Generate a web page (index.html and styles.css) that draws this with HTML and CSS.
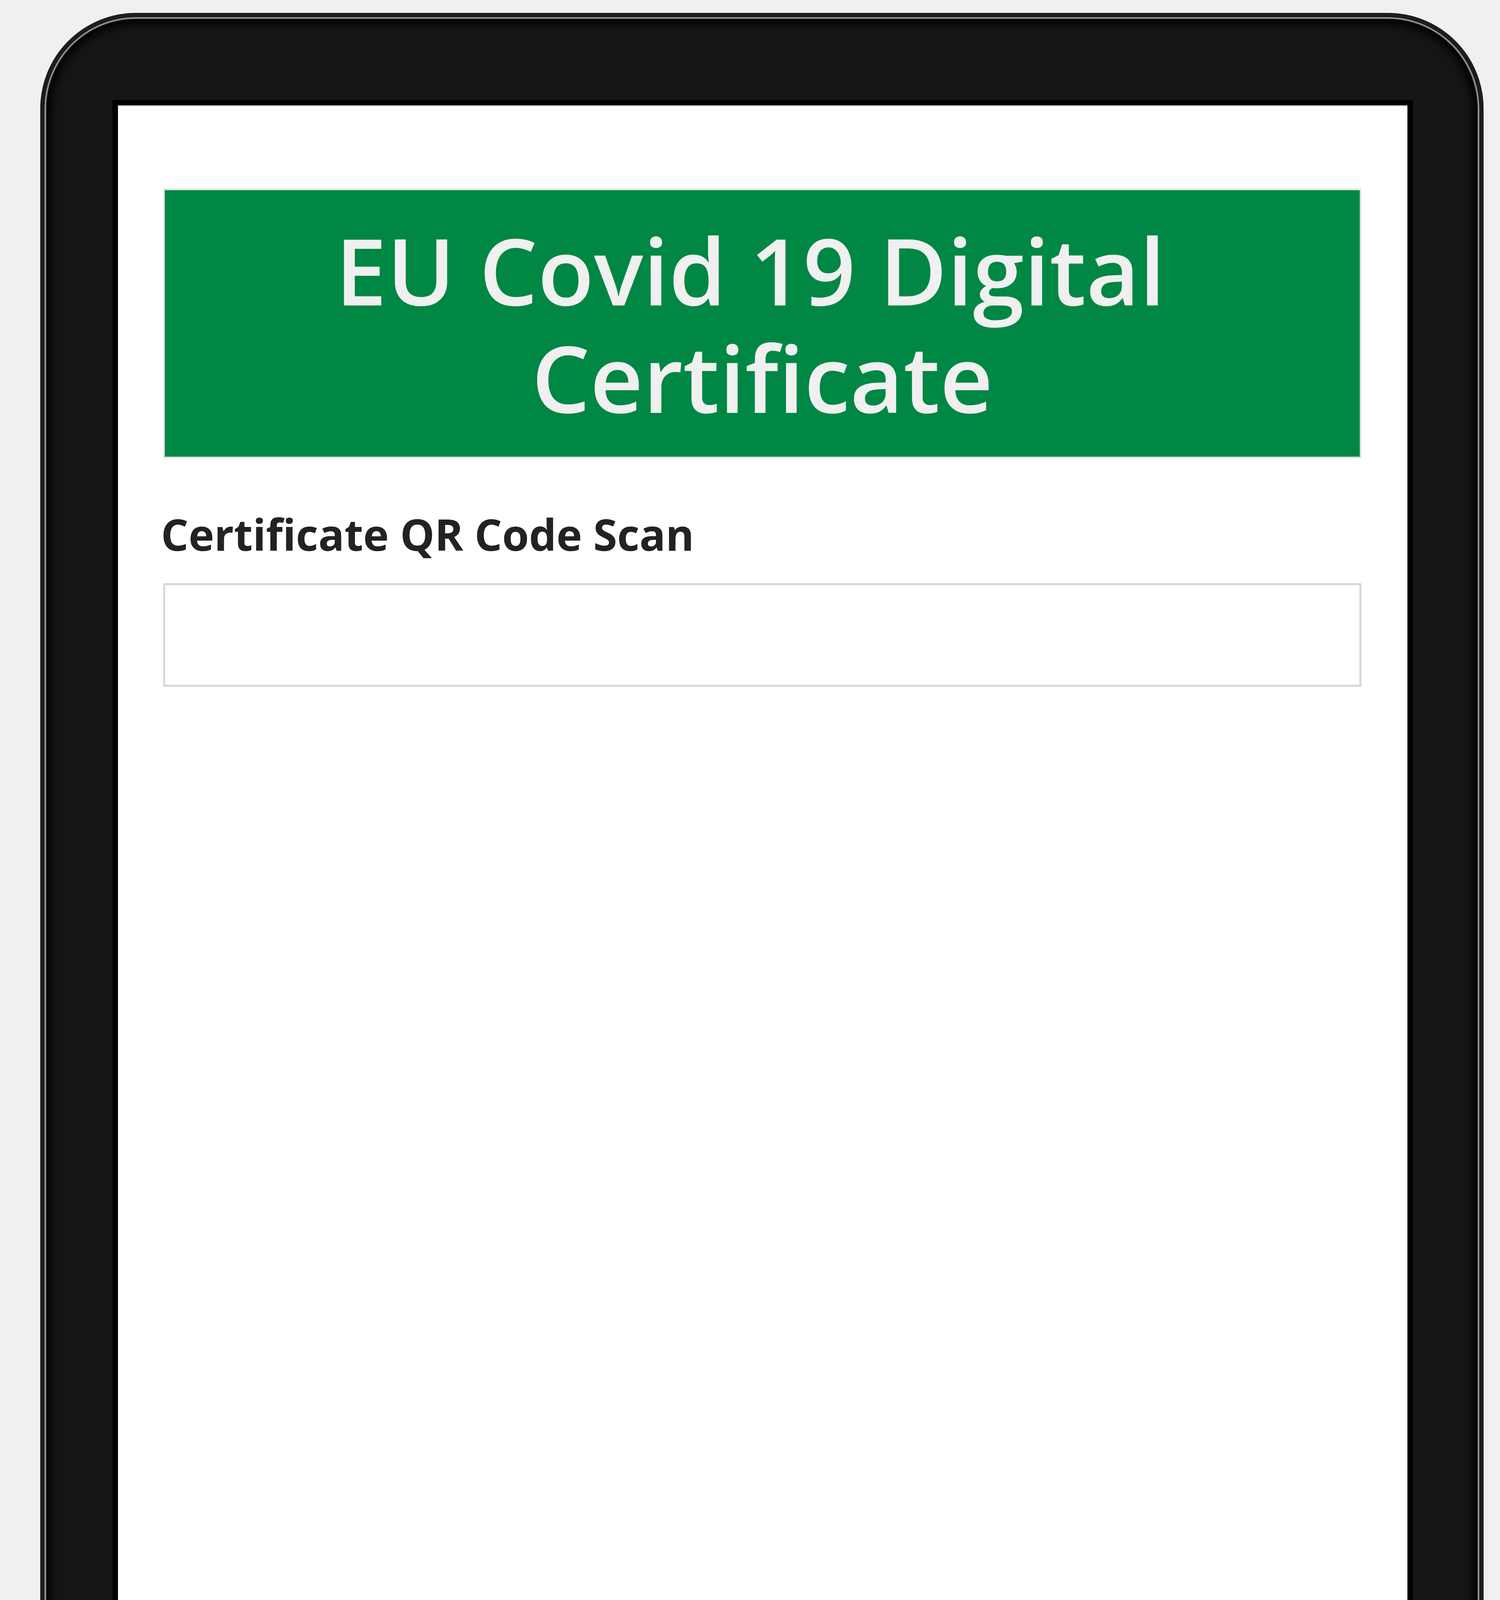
FILE: index.html
```html
<!DOCTYPE html>
<html lang="en">
<head>
<meta charset="utf-8">
<title>EU Covid 19 Digital Certificate</title>
<link rel="stylesheet" href="styles.css">
</head>
<body>
  <div class="device">
    <div class="screen">
      <div class="header">
        <h1 class="title">EU Covid 19 Digital Certificate</h1>
      </div>
      <label class="field-label" for="qr">Certificate QR Code Scan</label>
      <input id="qr" class="field-input" type="text">
    </div>
  </div>
</body>
</html>
```
FILE: styles.css
```css
* {
  box-sizing: border-box;
}

html {
  background: #f0f0f0;
}

body {
  margin: 0;
  padding: 33px 0 0 103px;
  background: #f0f0f0;
  font-family: "Open Sans", "Liberation Sans", sans-serif;
}

.device {
  width: 3695px;
  height: 6426px;
  border: 11px solid #1c1c1c;
  border-radius: 245px;
  background: #151515;
  box-shadow:
    inset 0 0 2px 4px #9c9c9c,
    inset 0 0 16px 20px #060606;
  padding: 212px 0 0 174px;
}

.screen {
  width: 3329px;
  height: 5893px;
  border: 14px solid #000;
  background: #fff;
  padding: 213px 118px 0 116px;
  display: flex;
  flex-direction: column;
}

.header {
  height: 690px;
  background: #008744;
  border: 4px solid #e2dede;
  display: flex;
  align-items: center;
  justify-content: center;
}

.title {
  margin: 0;
  font-family: "Open Sans", "Liberation Sans", sans-serif;
  font-weight: 600;
  font-size: 236px;
  line-height: 275px;
  color: #f0f0f0;
  text-align: center;
  white-space: break-spaces;
}

.field-label {
  margin-top: 118px;
  margin-left: -6px;
  font-family: "Open Sans", "Liberation Sans", sans-serif;
  font-weight: 700;
  font-size: 111px;
  line-height: 152px;
  color: #222222;
}

.field-input {
  margin: 50px 0 0 0;
  height: 265px;
  width: 100%;
  border: 5px solid #d6d6d6;
  background: #fff;
  outline: none;
  padding: 0 40px;
  font-family: "Open Sans", "Liberation Sans", sans-serif;
  font-size: 100px;
}
```
